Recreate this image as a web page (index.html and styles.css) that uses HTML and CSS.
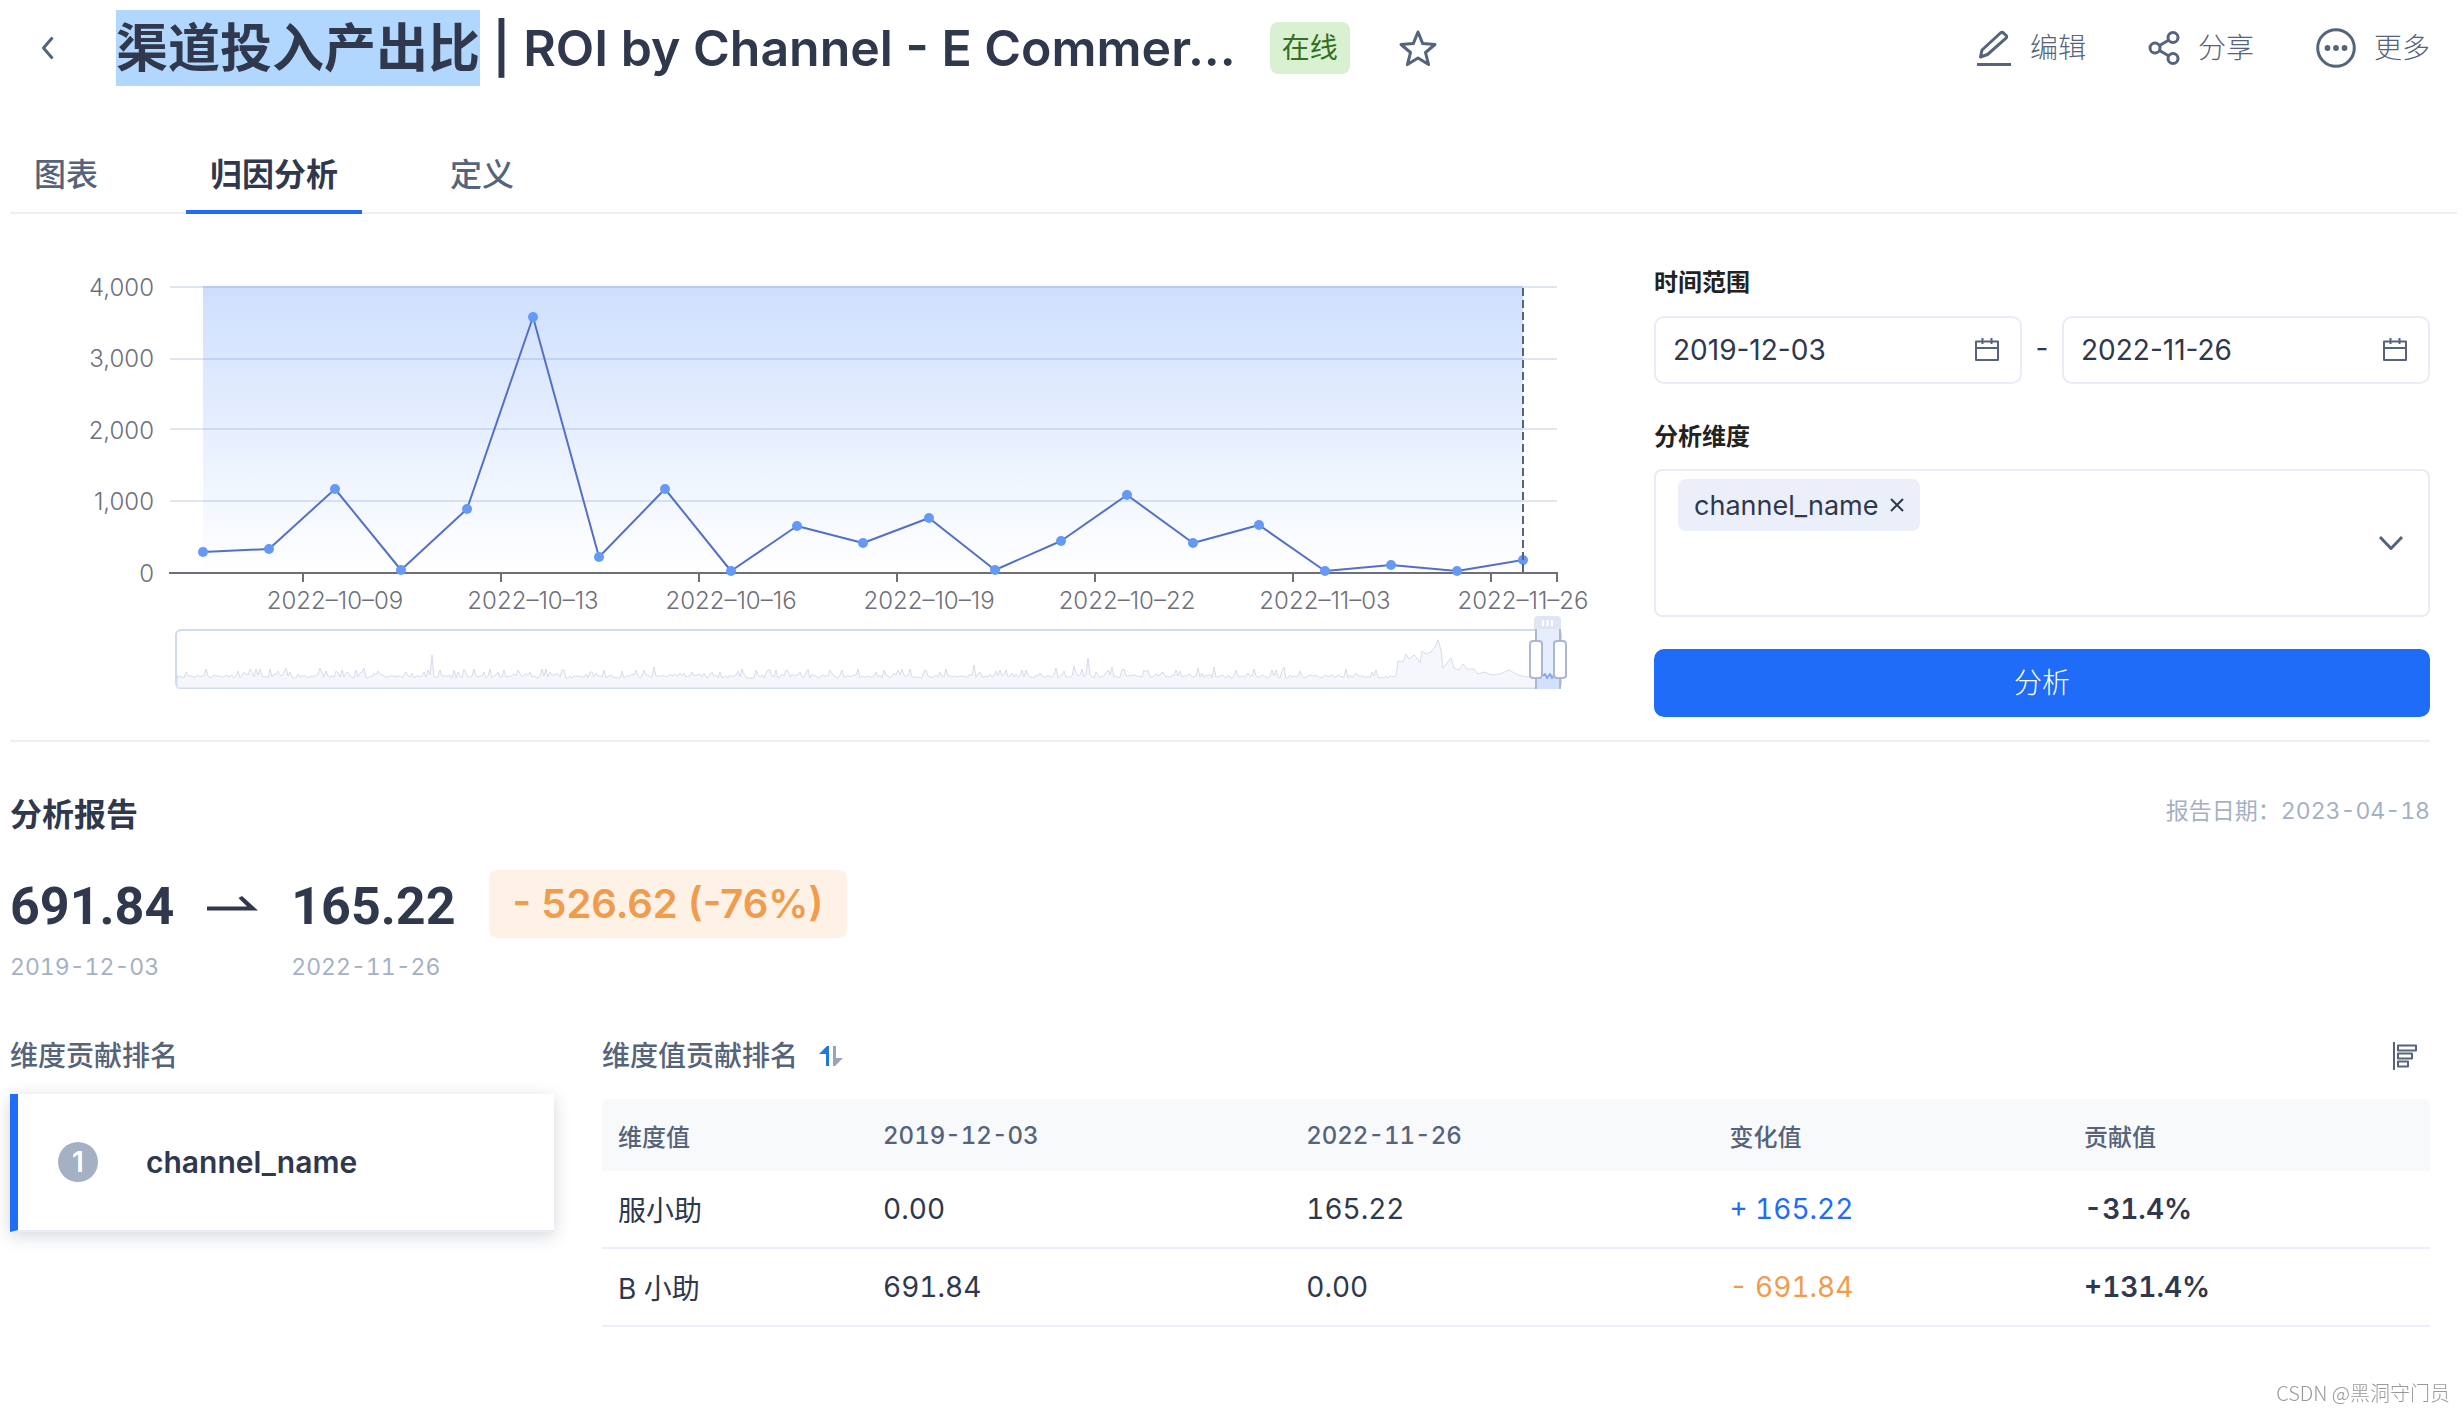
FILE: index.html
```html
<!DOCTYPE html>
<html lang="zh-CN">
<head>
<meta charset="utf-8">
<meta name="viewport" content="width=device-width, initial-scale=1">
<title>渠道投入产出比 | ROI by Channel</title>
<link rel="stylesheet" href="styles.css">
</head>
<body>
<header class="topbar">
  <button class="icon-btn back" type="button" aria-label="返回">
    <svg width="16" height="24" viewBox="0 0 16 24"><path d="M12.500 1.500 3.500 12l9 10.500"/></svg>
  </button>
  <h1 class="title"><mark class="selected">渠道投入产出比</mark> | ROI by Channel - E Commer...</h1>
  <span class="status">在线</span>
  <button class="icon-btn star" type="button" aria-label="收藏">
    <svg width="40" height="38" viewBox="0 0 40 38"><path d="M20 3l4.700 11.600 12.300.9-9.500 8 3.100 12.100L20 28.900 9.400 35.600l3.100-12.100-9.500-8 12.300-.9z"/></svg>
  </button>
  <nav class="actions">
    <button class="action" type="button">
      <svg width="36" height="36" viewBox="0 0 36 36"><path d="M1 34.500h34M4.500 27l1.500-7L24.500 3q1.500-1.200 3 0l2.500 2.300q1.300 1.400 0 2.900L11.500 24.500z"/></svg>编辑</button>
    <button class="action" type="button">
      <svg width="32" height="34" viewBox="0 0 32 34"><circle cx="7" cy="17" r="5"/><circle cx="25" cy="6.500" r="5"/><circle cx="25" cy="27.500" r="5"/><path d="M11.500 14.500l9-5.300M11.500 19.500l9 5.300"/></svg>分享</button>
    <button class="action" type="button">
      <svg width="40" height="40" viewBox="0 0 40 40"><circle cx="20" cy="20" r="18.300"/><g class="solid"><circle cx="11.500" cy="20" r="2.900"/><circle cx="20" cy="20" r="2.900"/><circle cx="28.500" cy="20" r="2.900"/></g></svg>更多</button>
  </nav>
</header>

<nav class="tabs">
  <a class="tab" href="#chart">图表</a>
  <a class="tab active" href="#attribution">归因分析</a>
  <a class="tab" href="#definition">定义</a>
</nav>

<main class="content">
  <section class="analysis">
    <svg class="chart" viewBox="10 266 1600 436" role="img" aria-label="ROI 趋势">
      <defs>
        <linearGradient id="area" x1="0" y1="0" x2="0" y2="1">
          <stop offset="0" stop-color="#1f6cf9" stop-opacity=".22"/>
          <stop offset="1" stop-color="#1f6cf9" stop-opacity="0"/>
        </linearGradient>
      </defs>
      <path class="grid" d="M170 287H1557M170 359H1557M170 429H1557M170 501H1557"/>
      <rect x="203" y="286" width="1320" height="287" fill="url(#area)"/>
      <path class="axis" d="M169 573H1558"/>
      <path class="axis ticks" d="M303 573v9M501 573v9M699 573v9M897 573v9M1095 573v9M1293 573v9M1491 573v9M1557 573v9"/>
      <g class="y-labels">
        <text x="154" y="296">4,000</text><text x="154" y="367">3,000</text><text x="154" y="439">2,000</text><text x="154" y="510">1,000</text><text x="154" y="582">0</text>
      </g>
      <g class="x-labels">
        <text x="335" y="609">2022–10–09</text><text x="533" y="609">2022–10–13</text><text x="731" y="609">2022–10–16</text><text x="929" y="609">2022–10–19</text><text x="1127" y="609">2022–10–22</text><text x="1325" y="609">2022–11–03</text><text x="1523" y="609">2022–11–26</text>
      </g>
      <g id="series"></g>
      <path class="marker" d="M1523 288V573"/>
      <rect class="brush" x="176" y="630" width="1385" height="58" rx="5"/>
      <path id="overview" class="overview"/>
      <rect class="window" x="1536" y="629" width="24" height="60"/>
      <path class="window-low" d="M1536 678h24v11h-24z"/>
      <path class="window-line" d="M1543 676l2-2 2 4 3-4 2 4 2-3"/>
      <path class="grip" d="M1534 629v-9q0-4 4-4h19q4 0 4 4v9z"/>
      <path class="grip-lines" d="M1543 620v6M1547.500 620v6M1552 620v6"/>
      <path class="edge" d="M1536 629v60M1560 629v60"/>
      <rect class="handle" x="1530" y="641" width="12" height="37" rx="3"/>
      <rect class="handle" x="1554" y="641" width="12" height="37" rx="3"/>
    </svg>

    <form class="panel">
      <label class="field-label" for="start">时间范围</label>
      <div class="range">
        <div class="date"><input id="start" type="text" value="2019-12-03"><svg width="26" height="24" viewBox="0 0 26 24"><path d="M2 3.500h22V22H2zM2 10h22M8.500 0v6M17.500 0v6"/></svg></div>
        <span class="dash">-</span>
        <div class="date"><input id="end" type="text" value="2022-11-26" aria-label="结束日期"><svg width="26" height="24" viewBox="0 0 26 24"><path d="M2 3.500h22V22H2zM2 10h22M8.500 0v6M17.500 0v6"/></svg></div>
      </div>
      <label class="field-label second" for="dimension">分析维度</label>
      <div class="multi">
        <span class="tag">channel_name<button class="icon-btn" type="button" aria-label="移除"><svg width="14" height="14" viewBox="0 0 14 14"><path d="M1 1l12 12M13 1 1 13"/></svg></button></span>
        <button class="icon-btn open" id="dimension" type="button" aria-label="展开"><svg width="26" height="16" viewBox="0 0 26 16"><path d="M2 2l11 11.500L24 2"/></svg></button>
      </div>
      <button class="submit" type="button">分析</button>
    </form>
  </section>

  <section class="report">
    <div class="report-head">
      <h2>分析报告</h2>
      <span class="muted">报告日期：2023-04-18</span>
    </div>
    <div class="metrics">
      <div><div class="value">691.84</div><div class="muted">2019-12-03</div></div>
      <svg class="arrow" width="51" height="16" viewBox="0 0 51 16"><path d="M0 10.500h40L31.500 2l3.500-2 16 14.500H0z"/></svg>
      <div><div class="value">165.22</div><div class="muted">2022-11-26</div></div>
      <span class="delta">- 526.62 (-76%)</span>
    </div>
    <div class="ranking">
      <div>
        <h3>维度贡献排名</h3>
        <div class="rank-card"><span class="rank">1</span>channel_name</div>
      </div>
      <div>
        <div class="table-head">
          <h3>维度值贡献排名</h3>
          <svg class="sort" width="24" height="20" viewBox="0 0 24 20"><path class="up" d="M10 20H7V8H0L8 0h2z"/><path class="down" d="M14 0h3v12h7l-8 8h-2z"/></svg>
          <button class="icon-btn bars" type="button" aria-label="条形图"><svg width="26" height="28" viewBox="0 0 26 28"><path d="M2 0v28M6 3.500h18v5H6zM6 11.500h14v5H6zM6 19.500h10v5H6z"/></svg></button>
        </div>
        <table>
          <thead><tr><th class="c1">维度值</th><th class="c2">2019-12-03</th><th class="c2">2022-11-26</th><th class="c3">变化值</th><th>贡献值</th></tr></thead>
          <tbody>
            <tr><td>服小助</td><td>0.00</td><td>165.22</td><td class="plus">+ 165.22</td><td class="strong">-31.4%</td></tr>
            <tr><td>B 小助</td><td>691.84</td><td>0.00</td><td class="minus">- 691.84</td><td class="strong">+131.4%</td></tr>
          </tbody>
        </table>
      </div>
    </div>
  </section>
</main>
<div class="watermark">CSDN @黑洞守门员</div>
<script src="chart.js"></script>
</body>
</html>
```
FILE: styles.css
```css
* { box-sizing: border-box; }
body {
  margin: 0;
  background: #fff;
  color: #2f384c;
  font-family: Inter, "Noto Sans CJK SC", sans-serif;
  font-size: 28px;
}
h1, h2, h3 { margin: 0; font-weight: 600; }
button, input { font: inherit; color: inherit; }
svg { flex: none; fill: none; stroke: #55647b; stroke-width: 3; stroke-linejoin: round; }

.icon-btn { display: flex; padding: 0; border: 0; background: none; }

.topbar { display: flex; align-items: center; padding: 10px 34px 0 40px; }
.title { margin-left: 60px; font-size: 50px; line-height: 76px; white-space: nowrap; }
.selected {
  display: inline-block;
  padding-top: 2px;
  background: #b2d7ff;
  color: inherit;
  font-size: 52px;
  line-height: 74px;
  vertical-align: top;
}
.status {
  margin-left: 34px;
  padding: 0 12px;
  border-radius: 8px;
  background: #d9f0d1;
  color: #34701f;
  line-height: 52px;
}
.star { margin-left: 48px; }
.actions { display: flex; gap: 62px; margin-left: auto; }
.action {
  display: flex;
  align-items: center;
  gap: 18px;
  padding: 0;
  border: 0;
  background: none;
  color: #55647b;
  font-weight: 300;
  line-height: 40px;
}
.solid { fill: #55647b; stroke: none; }

.tabs {
  display: flex;
  gap: 64px;
  height: 74px;
  margin: 54px 7px 0 10px;
  border-bottom: 2px solid #ebeff9;
}
.tab {
  height: 74px;
  padding: 0 24px;
  border-bottom: 4px solid transparent;
  color: #55647b;
  font-size: 32px;
  font-weight: 500;
  line-height: 70px;
  text-decoration: none;
}
.tab.active { border-color: #1f6cf9; color: #2f384c; font-weight: 600; }

.content { padding: 0 34px 0 10px; }
.analysis {
  display: grid;
  grid-template-columns: 1fr 776px;
  gap: 44px;
  align-items: start;
  padding: 52px 0 23px;
  border-bottom: 2px solid #ebeff9;
}

.chart { width: 100%; stroke: none; }
.chart text { fill: #6e7079; font-size: 24px; font-weight: 300; }
.y-labels { text-anchor: end; }
.x-labels { text-anchor: middle; }
.grid { stroke: #e0e6f1; stroke-width: 2; }
.axis { stroke: #6e7079; stroke-width: 2; }
.line { stroke: #5470c6; stroke-width: 2; }
.dot { fill: #6499f8; }
.marker { stroke: #55647b; stroke-width: 2; stroke-dasharray: 8 4; }
.brush { stroke: #d2dbee; stroke-width: 2; }
.overview { fill: #f6f7fc; stroke: #d5dcec; stroke-width: 1; }
.window { fill: #e6edfd; }
.window-low { fill: #d3e0fb; }
.window-line { stroke: #7fa8f8; stroke-width: 2; }
.grip { fill: #dfe5f2; }
.grip-lines { stroke: #fff; stroke-width: 2; }
.edge { stroke: #acb8d1; stroke-width: 2; }
.handle { fill: #fff; stroke: #acb8d1; stroke-width: 2; }

.field-label { display: block; color: #222; font-size: 24px; font-weight: 600; line-height: 34px; }
.second { margin-top: 36px; }
.range { display: flex; margin-top: 16px; }
.date {
  display: flex;
  flex: 1;
  min-width: 0;
  align-items: center;
  height: 68px;
  padding: 0 20px 0 17px;
  border: 2px solid #e7ecf6;
  border-radius: 10px;
}
.date input { flex: 1; min-width: 0; width: 100%; padding: 0; border: 0; outline: 0; background: none; }
.date svg { stroke-width: 2; }
.dash { flex: none; width: 40px; line-height: 64px; text-align: center; }
.multi {
  display: flex;
  align-items: center;
  justify-content: space-between;
  height: 148px;
  margin-top: 15px;
  padding: 8px 24px 8px 22px;
  border: 2px solid #e7ecf6;
  border-radius: 8px;
}
.tag {
  display: flex;
  align-items: center;
  align-self: flex-start;
  gap: 12px;
  height: 52px;
  padding: 0 16px;
  border-radius: 8px;
  background: #ebeff9;
  font-size: 27px;
}
.tag svg { stroke: #2f384c; stroke-width: 2; }
.submit {
  width: 100%;
  height: 68px;
  margin-top: 32px;
  padding: 0;
  border: 0;
  border-radius: 10px;
  background: #1f6cf9;
  color: #fff;
  font-weight: 300;
  line-height: 66px;
}

.report { padding-top: 53px; }
.report-head { display: flex; justify-content: space-between; }
.report h2 { font-size: 32px; line-height: 40px; }
.report h3 { color: #55647b; font-size: 28px; font-weight: 500; line-height: 40px; }
.muted {
  color: #a4b1c5;
  font-size: 23px;
  font-variant-numeric: tabular-nums;
  line-height: 32px;
}
.metrics { display: flex; align-items: flex-start; gap: 33px; margin-top: 35px; }
.metrics .muted { margin-top: 7px; }
.value { font-family: Roboto, sans-serif; font-size: 52px; font-weight: 700; line-height: 74px; }
.arrow { margin-top: 26px; fill: #2f384c; stroke: none; }
.delta {
  padding: 0 24px;
  border-radius: 8px;
  background: #fef1e5;
  color: #f09c4c;
  font-size: 40px;
  font-weight: 600;
  line-height: 68px;
}

.ranking { display: grid; grid-template-columns: 544px 1fr; gap: 48px; margin-top: 53px; }
.rank-card {
  display: flex;
  align-items: center;
  gap: 48px;
  height: 138px;
  margin-top: 18px;
  padding-left: 40px;
  border-bottom: 2px solid #e7ecf6;
  border-left: 8px solid #1f6cf9;
  box-shadow: 0 4px 16px rgba(47, 56, 76, .2);
  font-size: 30px;
  font-weight: 600;
}
.rank {
  width: 40px;
  border-radius: 50%;
  background: #a4b1c5;
  color: #fff;
  font-size: 28px;
  line-height: 40px;
  text-align: center;
}
.table-head { display: flex; align-items: center; }
.sort { margin-left: 21px; stroke: none; }
.up { fill: #1f78e0; }
.down { fill: #97a5bc; }
.bars { margin: 0 12px 0 auto; }
.bars svg { stroke-width: 2; }
table {
  width: 100%;
  margin-top: 23px;
  border-spacing: 0;
  font-variant-numeric: tabular-nums;
  table-layout: fixed;
}
th, td { padding: 0 16px; text-align: left; }
th { height: 72px; background: #f8f9fb; color: #55647b; font-size: 24px; font-weight: 500; }
th:first-child { border-top-left-radius: 8px; }
th:last-child { border-top-right-radius: 8px; }
td { height: 78px; border-bottom: 2px solid #ebeff9; }
.c1 { width: 14.5%; }
.c2 { width: 23.15%; }
.c3 { width: 19.4%; }
.plus { color: #1f6cf9; }
.minus { color: #f09c4c; }
.strong { font-weight: 600; }

.watermark {
  position: fixed;
  right: 14px;
  bottom: 4px;
  color: #999;
  font-family: "Noto Sans CJK SC", sans-serif;
  font-size: 20px;
  font-weight: 300;
  line-height: 30px;
}
```
FILE: chart.js
```js
const NS = "http://www.w3.org/2000/svg";
const series = document.getElementById("series");
const ys = [552, 549, 489, 570, 509, 317, 557, 489, 571, 526, 543, 518, 570, 541, 495, 543, 525, 571, 565, 571, 560];
const points = ys.map((y, i) => [203 + i * 66, y]);

function add(name, attrs) {
  const el = document.createElementNS(NS, name);
  for (const key in attrs) el.setAttribute(key, attrs[key]);
  series.appendChild(el);
}
add("polyline", { class: "line", points: points.join(" ") });
points.forEach(([cx, cy]) => add("circle", { class: "dot", cx, cy, r: 5 }));

// Whole-history overview under the chart: a low noisy baseline with a few peaks.
let seed = 11;
const random = () => (seed = (seed * 16807) % 2147483647) / 2147483647;
const peaks = { 432: 655, 207: 669, 251: 669, 364: 668, 654: 667, 974: 665, 1074: 666, 1088: 658, 1112: 667, 1214: 667, 1284: 667 };
const hump = [[1398, 661], [1403, 662], [1406, 654], [1409, 659], [1414, 655], [1417, 658], [1420, 663], [1422, 651], [1426, 654], [1431, 652], [1435, 647], [1438, 640], [1441, 650], [1443, 668], [1447, 663], [1451, 658], [1454, 668], [1459, 670], [1463, 664], [1467, 669], [1474, 669], [1478, 674], [1484, 672], [1492, 675], [1500, 674], [1509, 670], [1518, 675], [1527, 677], [1536, 676]];
let d = "M177 688V675";
for (let x = 178; x < 1398; x += 2) {
  const r = random();
  const y = peaks[x] || peaks[x + 1] || Math.round(678 - r * 4 - (r > 0.75 ? random() * 6 : 0));
  d += `L${x} ${y}`;
}
hump.forEach(([x, y]) => { d += `L${x} ${y}`; });
document.getElementById("overview").setAttribute("d", d + "V688Z");
```
